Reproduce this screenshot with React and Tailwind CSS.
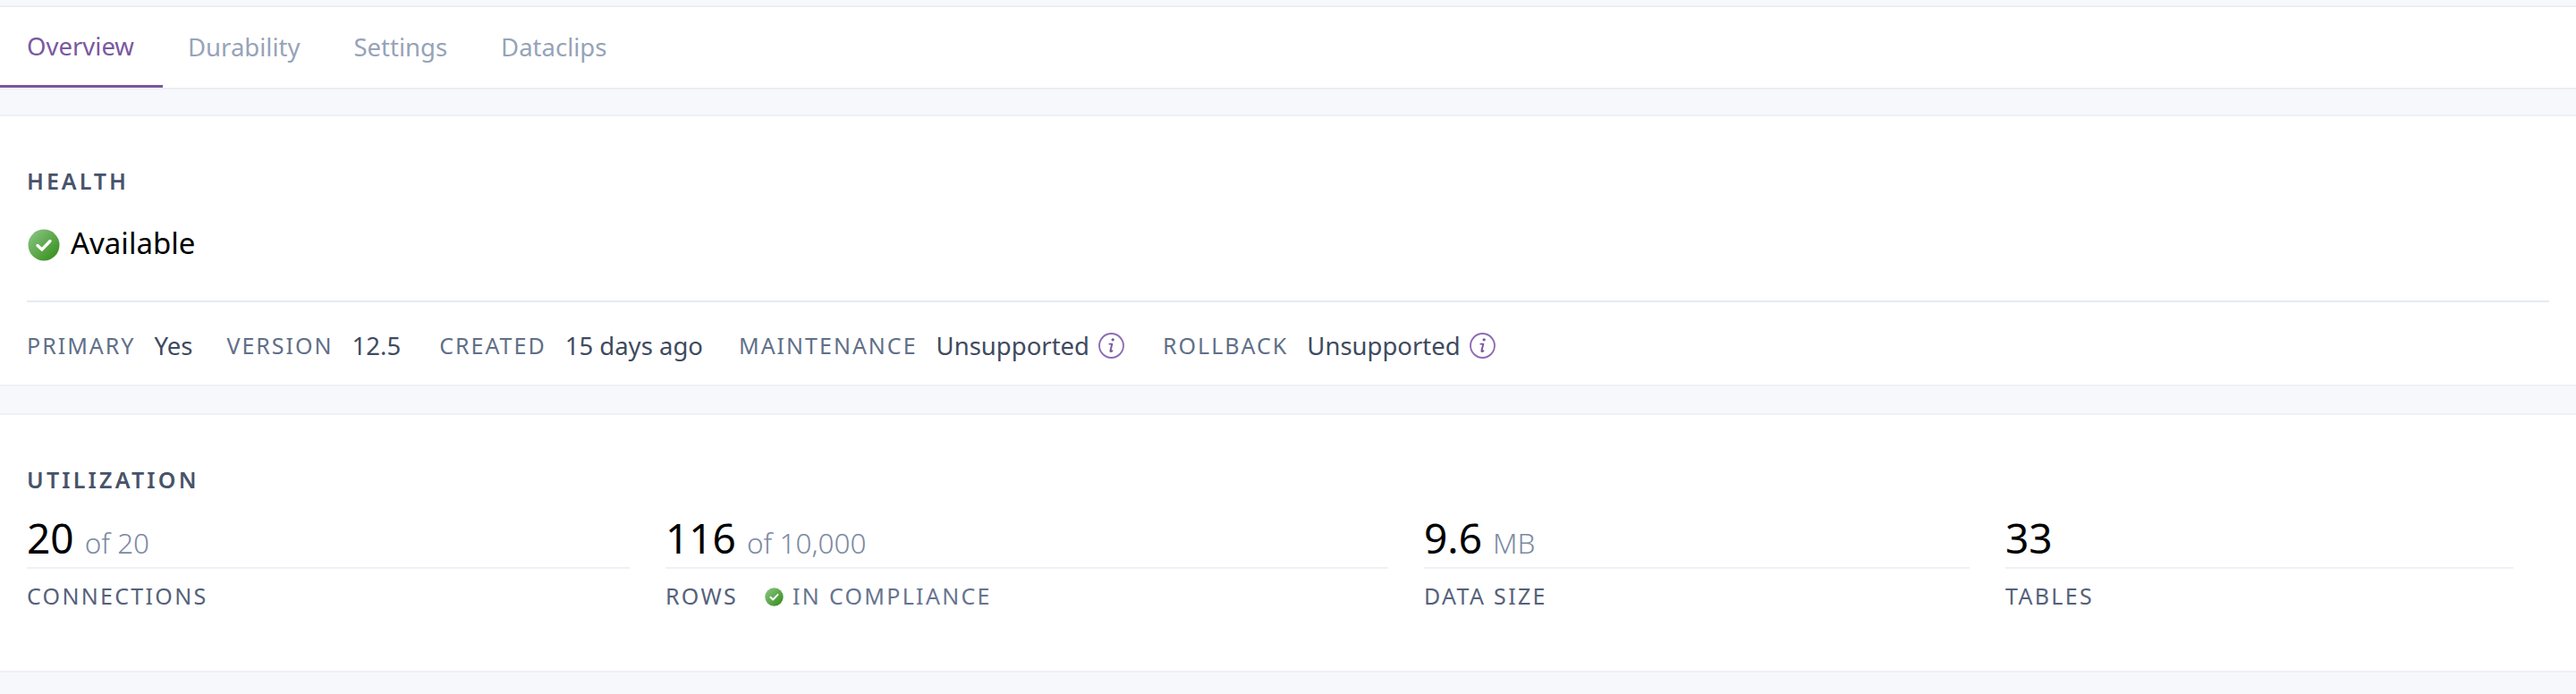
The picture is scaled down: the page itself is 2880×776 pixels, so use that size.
import React from "react";

function Check({ id, className }) {
  return (
    <svg viewBox="0 0 36 36" className={className}>
      <defs>
        <linearGradient id={id} x1="0" y1="0" x2="1" y2="1">
          <stop offset="0" stopColor="#8fc88a" />
          <stop offset="1" stopColor="#2f8a12" />
        </linearGradient>
      </defs>
      <circle cx="18" cy="18" r="17.5" fill={`url(#${id})`} />
      <path d="M11 18.5l4.8 4.6L25 13.5" fill="none" stroke="#fff" strokeWidth="3.4" strokeLinecap="round" strokeLinejoin="round" />
    </svg>
  );
}

function Info() {
  return (
    <svg viewBox="0 0 28 28" className="w-[29px] h-[29px] ml-[10px] -mt-[2px] shrink-0">
      <circle cx="14" cy="14" r="13" fill="none" stroke="#8d6cb5" strokeWidth="1.8" />
      <circle cx="15.6" cy="7.6" r="1.6" fill="#79589f" />
      <path d="M12 12.2h2.8l-1.8 7.2c-.2.9.4 1.2 1.9.3" fill="none" stroke="#79589f" strokeWidth="1.9" strokeLinecap="round" strokeLinejoin="round" />
    </svg>
  );
}

function Meta({ label, value, info, className = "" }) {
  return (
    <div className={`flex items-center ${className}`}>
      <span className="text-[25px] tracking-[2px] text-[#5f6f88]">{label}</span>
      <span className="ml-[21px] text-[27.5px] text-[#3f4a5f]">{value}</span>
      {info && <Info />}
    </div>
  );
}

function Stat({ value, unit, className, children }) {
  return (
    <div className={className}>
      <div className="h-[60px] flex items-baseline border-b-2 border-[#eef0f5]">
        <span className="text-[46px] leading-[50px] text-black">{value}</span>
        {unit && <span className="ml-[12px] text-[31.5px] font-light text-[#7d8aa3]">{unit}</span>}
      </div>
      <div className="mt-[15px] h-[32px] flex items-center text-[25px] tracking-[2.3px] text-[#55617a]">{children}</div>
    </div>
  );
}

export default function App() {
  return (
    <div className="min-h-[776px] bg-[#f7f8fc] font-['Noto_Sans',sans-serif] pt-[6px]">
      <nav className="h-[94px] bg-white border-y-2 border-[#eceef5] flex text-[27.5px]">
        <div className="h-[90px] w-[182px] px-[30px] flex items-center border-b-[3px] border-[#79589f] text-[#79589f]">Overview</div>
        <div className="h-[90px] pl-[28px] pr-[30px] flex items-center text-[#96a3b8]">Durability</div>
        <div className="h-[90px] px-[30px] flex items-center text-[#96a3b8]">Settings</div>
        <div className="h-[90px] px-[30px] flex items-center text-[#96a3b8]">Dataclips</div>
      </nav>

      <section className="mt-[28px] h-[304px] bg-white border-y-2 border-[#eef0f6] px-[30px]">
        <h2 className="pt-[54px] h-[120px] text-[25px] leading-[36px] font-semibold tracking-[3px] text-[#47536a]">HEALTH</h2>
        <div className="flex items-center h-[44px]">
          <Check id="g1" className="w-[36px] h-[36px] ml-[1px] mt-[4px]" />
          <span className="ml-[12px] text-[33px] leading-[44px] text-black">Available</span>
        </div>
        <div className="mt-[42px] border-t-2 border-[#e6e9f1] h-[92px] flex items-center pt-[8px]">
          <Meta label="PRIMARY" value="Yes" />
          <Meta label="VERSION" value="12.5" className="ml-[38px]" />
          <Meta label="CREATED" value="15 days ago" className="ml-[43px]" />
          <Meta label="MAINTENANCE" value="Unsupported" info className="ml-[40px]" />
          <Meta label="ROLLBACK" value="Unsupported" info className="ml-[43px]" />
        </div>
      </section>

      <section className="mt-[30px] h-[290px] bg-white border-y-2 border-[#eef0f6] px-[30px]">
        <h2 className="pt-[54px] h-[112px] text-[25px] leading-[36px] font-semibold tracking-[3.2px] text-[#47536a]">UTILIZATION</h2>
        <div className="flex gap-[40px]">
          <Stat value="20" unit="of 20" className="w-[674px]">CONNECTIONS</Stat>
          <Stat value="116" unit="of 10,000" className="w-[808px]">
            ROWS
            <Check id="g2" className="w-[21px] h-[21px] ml-[30px] mr-[10px]" />
            <span className="text-[#66748f]">IN COMPLIANCE</span>
          </Stat>
          <Stat value="9.6" unit="MB" className="w-[610px]">DATA SIZE</Stat>
          <Stat value="33" className="w-[568px]">TABLES</Stat>
        </div>
      </section>
    </div>
  );
}
